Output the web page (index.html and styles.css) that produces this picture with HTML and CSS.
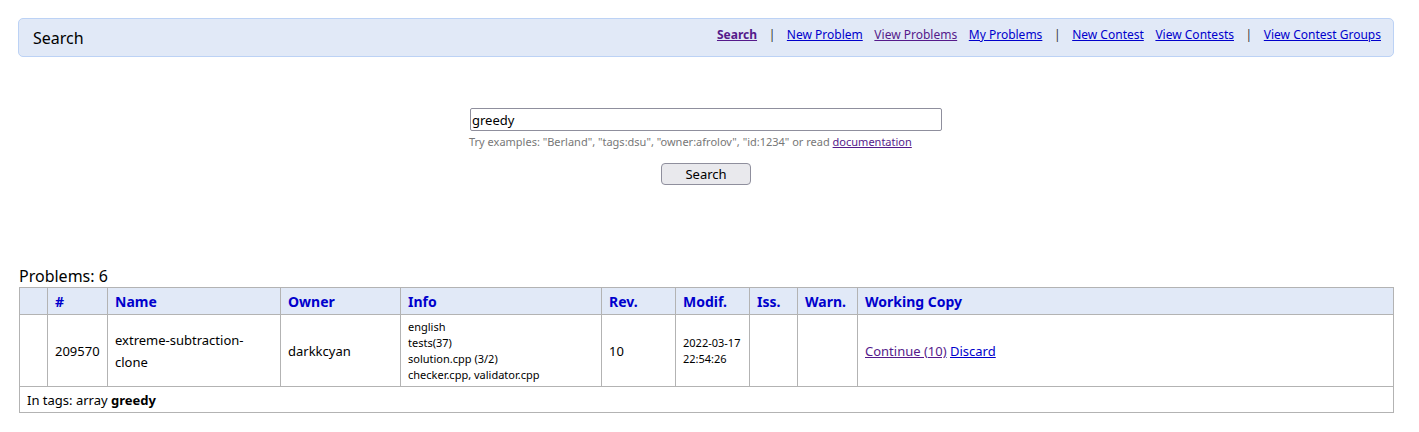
FILE: index.html
```html
<!DOCTYPE html>
<html>
<head>
<meta charset="utf-8">
<link rel="stylesheet" href="styles.css">
</head>
<body>
<div class="page">
  <div class="topbar">
    <div class="title">Search</div>
    <nav class="nav">
      <a class="cur" href="#">Search</a>
      <span class="sep">|</span>
      <a href="#">New Problem</a>
      <a class="visited" href="#">View Problems</a>
      <a href="#">My Problems</a>
      <span class="sep">|</span>
      <a href="#">New Contest</a>
      <a href="#">View Contests</a>
      <span class="sep">|</span>
      <a href="#">View Contest Groups</a>
    </nav>
  </div>

  <form class="search">
    <input class="query" type="text" value="greedy">
    <div class="hint">Try examples: "Berland", "tags:dsu", "owner:afrolov", "id:1234" or read <a class="visited" href="#">documentation</a></div>
    <button class="btn" type="button">Search</button>
  </form>

  <div class="count">Problems: 6</div>
  <table class="grid">
    <colgroup>
      <col style="width:28px">
      <col style="width:60px">
      <col style="width:173px">
      <col style="width:120px">
      <col style="width:201px">
      <col style="width:74px">
      <col style="width:74px">
      <col style="width:48px">
      <col style="width:60px">
      <col>
    </colgroup>
    <thead>
      <tr>
        <th></th><th>#</th><th>Name</th><th>Owner</th><th>Info</th><th>Rev.</th><th>Modif.</th><th>Iss.</th><th>Warn.</th><th>Working Copy</th>
      </tr>
    </thead>
    <tbody>
      <tr class="row">
        <td></td>
        <td>209570</td>
        <td>extreme-subtraction-clone</td>
        <td>darkkcyan</td>
        <td class="small">english<br>tests(37)<br>solution.cpp (3/2)<br>checker.cpp, validator.cpp</td>
        <td>10</td>
        <td class="small">2022-03-17<br>22:54:26</td>
        <td></td>
        <td></td>
        <td><a class="visited" href="#">Continue (10)</a> <a href="#">Discard</a></td>
      </tr>
      <tr class="tags">
        <td colspan="10">In tags: array <b>greedy</b></td>
      </tr>
    </tbody>
  </table>
</div>
</body>
</html>
```

FILE: styles.css
```css
html, body {
  margin: 0;
  padding: 0;
  background: #fff;
}
body {
  font-family: "Noto Sans", "Open Sans", sans-serif;
  color: #000;
}
.page {
  padding: 18px 25px 0 18px;
}
a {
  color: #0000cc;
}
a.visited {
  color: #551a8b;
}
.topbar {
  display: flex;
  align-items: center;
  justify-content: space-between;
  height: 37px;
  background: #e1e9f7;
  border: 1px solid #bcd2f5;
  border-radius: 5px;
  padding: 0 12px 0 14px;
}
.title {
  font-size: 16px;
  margin-top: 0;
}
.nav {
  display: flex;
  align-items: center;
  gap: 11.6px;
  font-size: 12px;
  margin-top: -6px;
}
.nav a.cur {
  font-weight: bold;
  color: #551a8b;
}
.nav .sep {
  margin: 0;
  color: #333;
}
.search {
  display: flex;
  flex-direction: column;
  align-items: center;
  margin-top: 51px;
}
.query {
  box-sizing: border-box;
  width: 472px;
  height: 23px;
  border: 1px solid #8f8f9d;
  border-radius: 2px;
  font-family: inherit;
  font-size: 13px;
  padding: 0 1px;
  margin: 0;
}
.hint {
  width: 474px;
  font-size: 11px;
  color: #777;
  margin-top: 3px;
  line-height: 16px;
}
.btn {
  margin-top: 13px;
  width: 90px;
  height: 22px;
  box-sizing: border-box;
  background: #e9e9ed;
  border: 1px solid #8f8f9d;
  border-radius: 4px;
  font-family: inherit;
  font-size: 13px;
  padding: 0;
  color: #000;
}
.count {
  margin-top: 81px;
  margin-left: 1px;
  font-size: 16px;
  line-height: 21px;
}
.grid {
  margin-left: 1px;
  width: 1375px;
  table-layout: fixed;
  border-collapse: collapse;
  font-size: 13px;
}
.grid th, .grid td {
  border: 1px solid #b3b3b3;
  padding: 0 7px;
  text-align: left;
  vertical-align: middle;
}
.grid th {
  background: #e1e9f7;
  color: #0000cc;
  font-size: 14px;
  height: 26px;
}
.grid .row td {
  height: 71px;
  line-height: 22px;
}
.grid td.small {
  font-size: 11px;
  line-height: 16px;
}
.grid .tags td {
  height: 25px;
}
```
